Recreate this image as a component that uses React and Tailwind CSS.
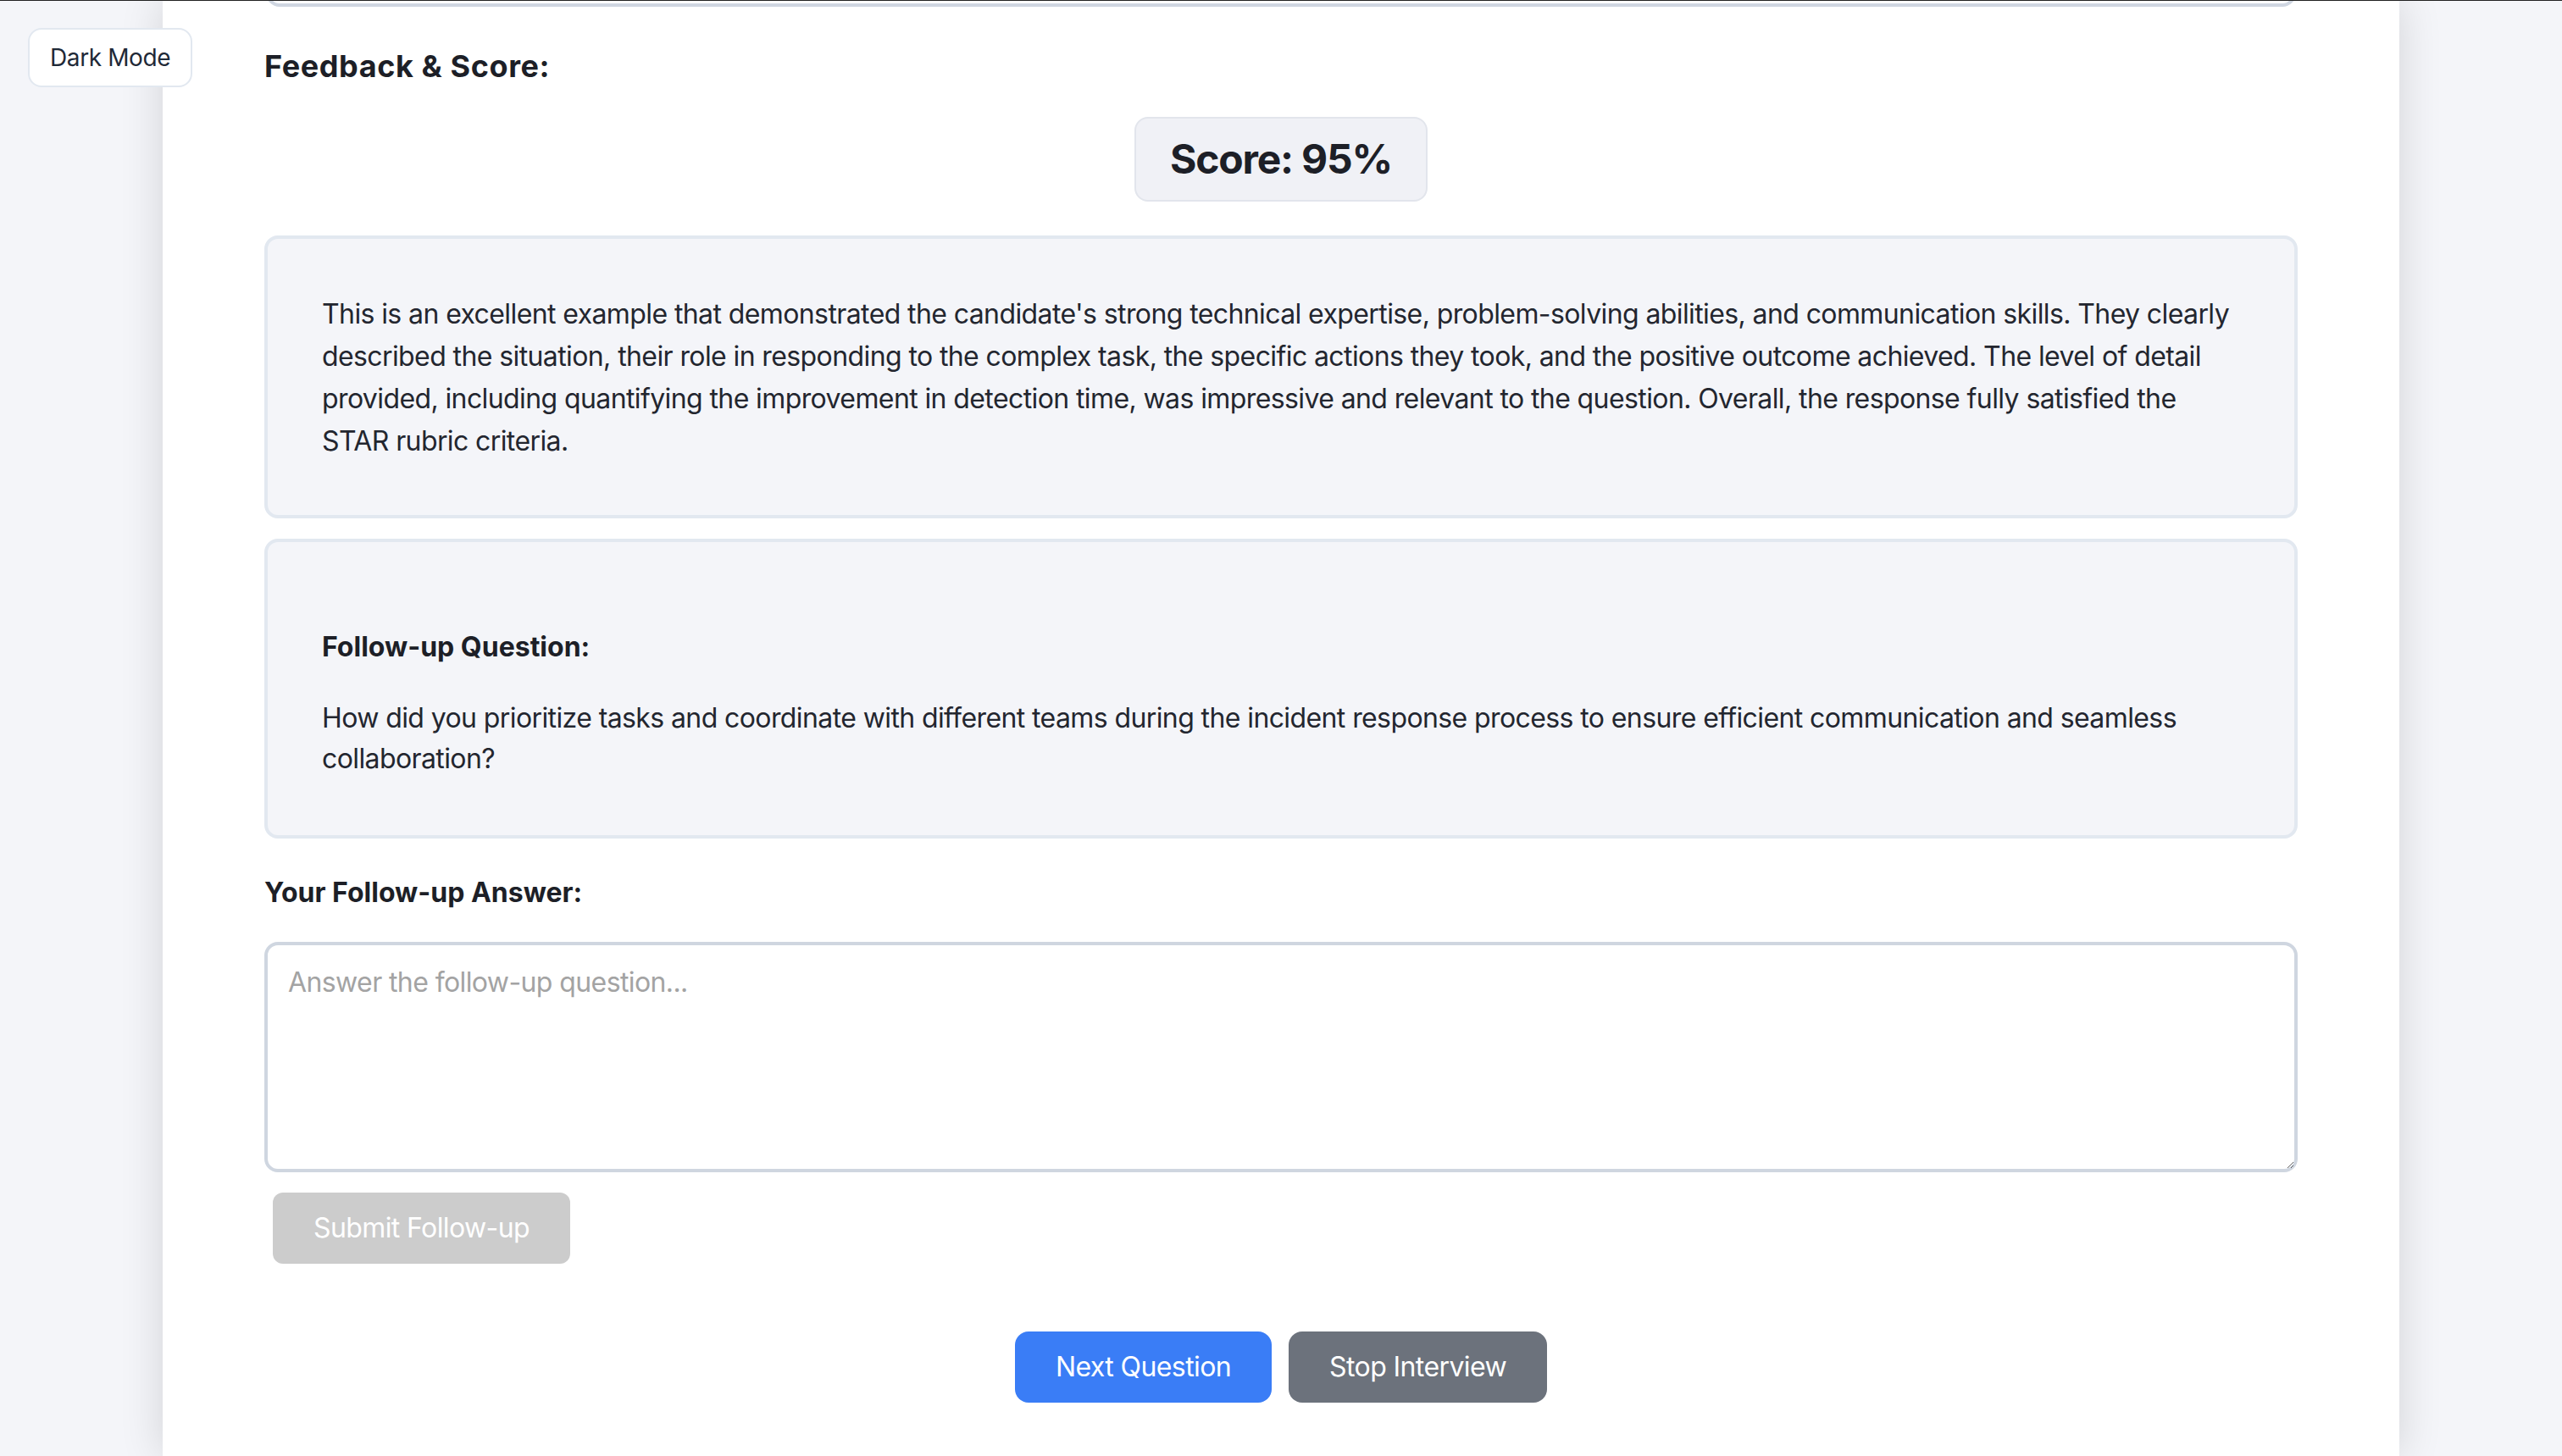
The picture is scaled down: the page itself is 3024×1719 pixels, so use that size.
export default function App() {
  return (
    <div className="relative h-[1719px] w-[3024px] overflow-hidden bg-[#f4f5f9]">
      <div className="relative h-[860px] font-['Inter',sans-serif] [zoom:2]">
        <div className="mx-auto flow-root h-full w-[1320px] bg-white px-[60px] shadow-[0_0_24px_rgba(0,0,0,0.14)]">
          <div className="mx-px -mt-5 h-6 rounded-lg border-2 border-[#cfd6e1]" />
          <h2 className="mt-[21px] text-lg leading-7 font-bold tracking-[0.3px] text-[#1d1f27]">Feedback &amp; Score:</h2>
          <div className="mt-4 flex justify-center">
            <div className="rounded-lg border border-[#e2e5ec] bg-[#f0f1f6] px-5 py-2 text-2xl leading-8 font-bold tracking-[-0.6px] text-[#1d1f27]">
              Score: 95%
            </div>
          </div>
          <div className="mt-5 rounded-lg border-2 border-[#e2e8f0] bg-[#f4f5f9] px-8 pt-8 pb-[31px] text-base leading-[25px] tracking-[-0.3px] text-[#23262f]">
            This is an excellent example that demonstrated the candidate's strong technical expertise, problem-solving abilities, and communication skills. They clearly described the situation, their role in responding to the complex task, the specific actions they took, and the positive outcome achieved. The level of detail provided, including quantifying the improvement in detection time, was impressive and relevant to the question. Overall, the response fully satisfied the STAR rubric criteria.
          </div>
          <div className="mt-3 rounded-lg border-2 border-[#e2e8f0] bg-[#f4f5f9] px-8 pt-8 pb-[33px] text-base leading-6 text-[#23262f]">
            <h4 className="mt-[18px] font-bold text-[#1d1f27]">Follow-up Question:</h4>
            <p className="mt-[18px] tracking-[-0.3px]">
              How did you prioritize tasks and coordinate with different teams during the incident response process to ensure efficient communication and seamless collaboration?
            </p>
          </div>
          <h4 className="mt-5 text-base leading-6 font-bold text-[#1d1f27]">Your Follow-up Answer:</h4>
          <textarea
            className="mt-[17px] block h-[136px] w-full rounded-lg border-2 border-[#cfd6e0] bg-white px-3 py-[10px] text-base leading-6 tracking-[-0.3px] text-[#23262f] outline-none placeholder:text-[#a3a3a3]"
            placeholder="Answer the follow-up question..."
          />
          <button className="ml-[5px] mt-[12px] rounded-md bg-[#cccccc] px-6 py-[9px] text-base leading-6 tracking-[-0.3px] text-white">
            Submit Follow-up
          </button>
          <div className="mt-10 flex justify-center gap-2.5">
            <button className="rounded-lg bg-[#3a7df6] px-6 py-[9px] text-base leading-6 tracking-[-0.3px] text-white">Next Question</button>
            <button className="rounded-lg bg-[#6c727c] px-6 py-[9px] text-base leading-6 tracking-[-0.3px] text-white">Stop Interview</button>
          </div>
        </div>
        <button className="absolute left-[16.5px] top-[16.5px] rounded-lg border border-[#e2e8f0] bg-white px-3 py-[6.5px] text-sm leading-5 tracking-[-0.2px] text-[#1f2937]">
          Dark Mode
        </button>
      </div>
      <div className="absolute inset-x-0 top-0 h-px bg-[#222222]" />
    </div>
  );
}
